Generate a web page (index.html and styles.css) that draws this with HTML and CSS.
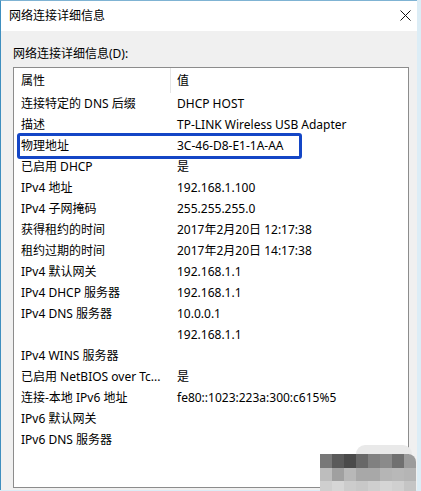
FILE: index.html
```html
<!DOCTYPE html>
<html lang="zh-CN">
<head>
<meta charset="utf-8">
<title>网络连接详细信息</title>
<link rel="stylesheet" href="styles.css">
</head>
<body>
<div class="window">
  <div class="titlebar">
    <span class="title">网络连接详细信息</span>
    <svg class="close" width="11" height="11" viewBox="0 0 11 11"><path d="M0.5 0.5 L10.5 10.5 M10.5 0.5 L0.5 10.5" stroke="#111" stroke-width="1" fill="none"/></svg>
  </div>
  <div class="content">
    <div class="label">网络连接详细信息(D):</div>
    <div class="listbox">
      <div class="header">
        <div class="hcell c1">属性</div>
        <div class="hcell c2">值</div>
      </div>
      <div class="row"><div class="c1">连接特定的 DNS 后缀</div><div class="c2">DHCP HOST</div></div>
      <div class="row"><div class="c1">描述</div><div class="c2">TP-LINK Wireless USB Adapter</div></div>
      <div class="row"><div class="c1">物理地址</div><div class="c2">3C-46-D8-E1-1A-AA</div></div>
      <div class="row"><div class="c1">已启用 DHCP</div><div class="c2">是</div></div>
      <div class="row"><div class="c1">IPv4 地址</div><div class="c2">192.168.1.100</div></div>
      <div class="row"><div class="c1">IPv4 子网掩码</div><div class="c2">255.255.255.0</div></div>
      <div class="row"><div class="c1">获得租约的时间</div><div class="c2">2017年2月20日 12:17:38</div></div>
      <div class="row"><div class="c1">租约过期的时间</div><div class="c2">2017年2月20日 14:17:38</div></div>
      <div class="row"><div class="c1">IPv4 默认网关</div><div class="c2">192.168.1.1</div></div>
      <div class="row"><div class="c1">IPv4 DHCP 服务器</div><div class="c2">192.168.1.1</div></div>
      <div class="row"><div class="c1">IPv4 DNS 服务器</div><div class="c2">10.0.0.1</div></div>
      <div class="row"><div class="c1"></div><div class="c2">192.168.1.1</div></div>
      <div class="row"><div class="c1">IPv4 WINS 服务器</div><div class="c2"></div></div>
      <div class="row"><div class="c1">已启用 NetBIOS over Tc...</div><div class="c2">是</div></div>
      <div class="row"><div class="c1">连接-本地 IPv6 地址</div><div class="c2">fe80::1023:223a:300:c615%5</div></div>
      <div class="row"><div class="c1">IPv6 默认网关</div><div class="c2"></div></div>
      <div class="row"><div class="c1">IPv6 DNS 服务器</div><div class="c2"></div></div>
      <div class="highlight"></div>
    </div>
  </div>
  <div class="mosaic">
    <div class="cap"></div>
    <div class="grid">
      <i style="background:#787878"></i><i style="background:#5a5a5a"></i><i style="background:#4a4a4a"></i><i style="background:#686868"></i><i style="background:#808080"></i><i style="background:#8a8a8a"></i><i style="background:#707070"></i><i class="tr" style="background:#9c9c9c"></i>
      <i style="background:#bdbdbd"></i><i style="background:#a0a0a0"></i><i style="background:#b8b8b8"></i><i style="background:#a8a8a8"></i><i style="background:#a8a8a8"></i><i style="background:#b5b5b5"></i><i style="background:#b8b8b8"></i><i style="background:#b5b5b5"></i>
      <i style="background:#cfcfcf"></i><i style="background:#d6d6d6"></i><i style="background:#cccccc"></i><i style="background:#c8c8c8"></i><i style="background:#cfcfcf"></i><i style="background:#d5d5d5"></i><i style="background:#d0d0d0"></i><i style="background:#c5c5c5"></i>
    </div>
  </div>
</div>
</body>
</html>
```
FILE: styles.css
```css
html, body {
  margin: 0;
  padding: 0;
}
body {
  width: 421px;
  height: 491px;
  overflow: hidden;
  background: #dcedf6;
  font-family: "Noto Sans", "Noto Sans CJK SC", sans-serif;
  font-size: 12px;
  color: #000;
}
.window {
  position: relative;
  width: 417px;
  height: 490px;
  border-left: 1px solid #3f8fbf;
  border-top: 1px solid #7fb3d3;
  background: #f0f0f0;
  box-sizing: border-box;
  display: flex;
  flex-direction: column;
}
.titlebar {
  height: 30px;
  background: #fff;
  display: flex;
  align-items: center;
  justify-content: space-between;
  padding: 0 6px 0 8px;
  flex: none;
}
.title {
  line-height: 16px;
  padding-bottom: 1px;
}
.close {
  display: block;
  margin-top: -1px;
}
.content {
  padding: 15px 0 0 12px;
}
.label {
  line-height: 16px;
  margin-bottom: 5px;
}
.listbox {
  position: relative;
  width: 396px;
  height: 421px;
  box-sizing: border-box;
  border: 1px solid #8c8c8c;
  background: #fff;
}
.header {
  display: flex;
  height: 25px;
  align-items: center;
}
.hcell {
  line-height: 16px;
}
.hcell.c2 {
  border-left: 1px solid #e5e5e5;
  align-self: stretch;
  display: flex;
  align-items: center;
  padding-left: 6px;
}
.c1 {
  width: 156px;
  padding-left: 7px;
  box-sizing: border-box;
  white-space: nowrap;
  overflow: hidden;
}
.c2 {
  padding-left: 7px;
  white-space: nowrap;
}
.row {
  display: flex;
  height: 21px;
  align-items: center;
  line-height: 16px;
}
.highlight {
  position: absolute;
  left: 3px;
  top: 65px;
  width: 285px;
  height: 26px;
  box-sizing: border-box;
  border: 3px solid #1446c6;
  border-radius: 3px;
}
.mosaic {
  position: absolute;
  left: 319px;
  top: 444px;
  width: 96px;
}
.cap {
  margin-left: 36px;
  width: 56px;
  height: 9px;
  background: #e9e9e9;
  border-radius: 10px 10px 0 0;
}
.grid {
  display: grid;
  grid-template-columns: repeat(8, 12px);
  grid-template-rows: 14px 13px 11px;
}
.grid i {
  display: block;
}
.grid i.tr {
  border-top-right-radius: 8px;
}
```
